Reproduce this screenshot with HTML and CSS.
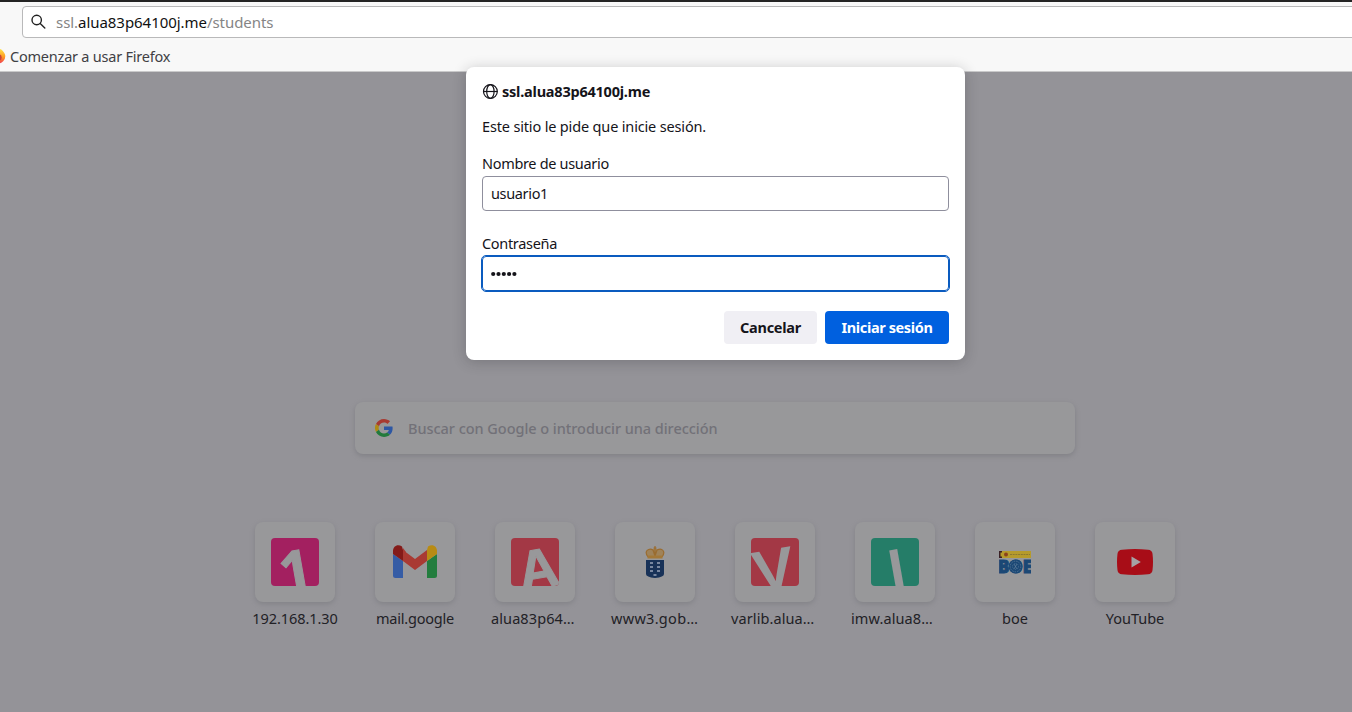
FILE: index.html
```
<!DOCTYPE html>
<html lang="es">
<head>
<meta charset="utf-8">
<title>Inicio de sesión</title>
<link rel="stylesheet" href="styles.css">
</head>
<body>
<header class="chrome">
  <div class="urlbar">
    <svg class="search-icon" width="16" height="16" viewBox="0 0 16 16" fill="none" stroke="#222" stroke-width="1.400" stroke-linecap="round"><circle cx="5.700" cy="6" r="4.700"/><path d="M9.200 9.500l4.600 4.600"/></svg>
    <span class="url">ssl.<span class="host">alua83p64100j.me</span>/students</span>
  </div>
  <div class="bookmarks">
    <svg class="fox" width="6" height="16" viewBox="10 0 6 16"><defs><linearGradient id="flame" x1="0" y1="0" x2="0" y2="1"><stop offset="0" stop-color="#ffe14a"/><stop offset=".55" stop-color="#ff9a1f"/><stop offset="1" stop-color="#f03a55"/></linearGradient></defs><path d="M8 3L10.500 1c2 1.500 4.800 4 4.800 7.200A7.300 7.300 0 0 1 8 15.500z" fill="url(#flame)"/><circle cx="8.500" cy="9.500" r="3.200" fill="#c8433c"/></svg>
    <span class="bookmark">Comenzar a usar Firefox</span>
  </div>
</header>
<main class="page">
  <div class="search">
    <svg width="18" height="18" viewBox="0 0 48 48"><path fill="#a73a31" d="M24 9.500c3.500 0 6.700 1.200 9.200 3.600l6.900-6.900C35.900 2.400 30.500 0 24 0 14.600 0 6.500 5.400 2.600 13.200l8 6.200C12.400 13.700 17.700 9.500 24 9.500z"/><path fill="#2d57a4" d="M47 24.500c0-1.600-.2-3.100-.4-4.500H24v9h12.900c-.6 3-2.300 5.500-4.800 7.200l7.700 6C44.400 38 47 31.800 47 24.500z"/><path fill="#b08a14" d="M10.500 28.600A14.500 14.500 0 0 1 10.500 19.400l-7.900-6.200a24 24 0 0 0 0 21.600z"/><path fill="#227a3b" d="M24 48c6.500 0 11.900-2.100 15.900-5.800l-7.800-6c-2.100 1.500-4.900 2.300-8.100 2.300-6.300 0-11.600-4.200-13.500-9.900l-7.900 6.200C6.500 42.600 14.600 48 24 48z"/></svg>
    <span class="placeholder">Buscar con Google o introducir una dirección</span>
  </div>
  <div class="sites">
    <div class="site"><div class="tile"><div class="letter pink"><span class="one">1</span></div></div><span class="name n1">192.168.1.30</span></div>
    <div class="site"><div class="tile"><svg width="44" height="34" viewBox="0 0 44 34"><path fill="#355ca5" d="M0 9l10 7v17H2.500Q0 33 0 30.500z"/><path fill="#237d3e" d="M44 9l-10 7v17h7.500Q44 33 44 30.500z"/><path fill="#a93a33" d="M10 5l12 9 12-9v11L22 25 10 16z"/><path fill="#841b19" d="M0 6C0 .7 5-1.500 9 1.500l1 3.500V16L0 9z"/><path fill="#b88b14" d="M44 6c0-5.300-5-7.500-9-4.500l-1 3.500V16l10-7z"/><path fill="#a93a33" d="M10 3l3 4V17l-3-1z"/></svg></div><span class="name n2">mail.google</span></div>
    <div class="site"><div class="tile"><div class="letter red"><span class="a">A</span></div></div><span class="name cut n3">alua83p64…</span></div>
    <div class="site"><div class="tile"><svg class="crest" width="20" height="32" viewBox="0 0 20 32"><path fill="#a37838" opacity=".65" d="M3 11L.8 6 4 3l4 .5L10 1l2 2.500L16 3l3.200 3L17 11z"/><g fill="none" stroke="#9a6c30" stroke-width="1.200"><path d="M3 11Q0 7 2 4.500 5 2 8 4L10 10 12 4Q16 2 18 4.500 20 7 17 11M10 0v10M8.500 2h3"/></g><path fill="#a37838" d="M2.500 9.500h15v3h-15z"/><path fill="#183258" d="M1 14h18v14q0 3-9 4-9-1-9-4z"/><path fill="#7887a0" d="M5 16h3v2H5zM12 16h3v2h-3zM5 20h3v2H5zM12 20h3v2h-3zM5 24h3v2H5zM12 24h3v2h-3zM8.500 28h3v2h-3z"/></svg></div><span class="name cut n4">www3.gob…</span></div>
    <div class="site"><div class="tile"><div class="letter red"><span class="v">V</span></div></div><span class="name cut n5">varlib.alua…</span></div>
    <div class="site"><div class="tile"><div class="letter green"><span class="i">I</span></div></div><span class="name cut n6">imw.alua8…</span></div>
    <div class="site"><div class="tile"><svg width="32" height="24" viewBox="0 0 32 24"><path fill="#b69b2c" d="M0 1h32v7H0z"/><path fill="#3a2025" d="M0 1h3v1.500H1.500v4H3V8H0z"/><circle cx="7" cy="4.500" r="2" fill="#8b421c"/><path d="M11 4.500h20" stroke="#8b7930" stroke-dasharray="2 .7"/><text class="boe" x="-1" y="22.500" textLength="34" lengthAdjust="spacingAndGlyphs">BOE</text><circle cx="16.500" cy="16.500" r="7" fill="#1b4875"/><g fill="none" stroke="#60809c" stroke-width=".7"><circle cx="16.500" cy="16.500" r="5.300" stroke-dasharray="1.500 1"/><circle cx="16.500" cy="16.500" r="3" stroke-dasharray="1 1"/><path d="M15 14l3 5m0-5l-3 5"/></g></svg></div><span class="name n7">boe</span></div>
    <div class="site"><div class="tile"><svg width="36" height="26" viewBox="0 0 36 26"><path fill="#a80d17" d="M5 .7Q18-.7 31 .7q4 .3 4.500 4 1 8.300 0 16.600-.5 3.700-4.500 4Q18 26.700 5 25.300 1 25 .5 21.300-.5 13 .5 4.700 1 1 5 .7z"/><path fill="#a5a2a4" d="M14.500 7.500l9.300 5.500-9.300 5.500z"/></svg></div><span class="name n8">YouTube</span></div>
  </div>
</main>
<section class="dialog">
  <div class="title"><svg width="16" height="16" viewBox="0 0 16 16" fill="none" stroke="#15141a" stroke-width="1.200"><circle cx="8.400" cy="8.500" r="6.900"/><ellipse cx="8.400" cy="8.500" rx="3.700" ry="6.900"/><path d="M1.500 8.500h14"/></svg><span class="site-host">ssl.alua83p64100j.me</span></div>
  <p class="message"><span class="msg-text">Este sitio le pide que inicie sesión.</span></p>
  <div class="label"><span class="user-label">Nombre de usuario</span></div>
  <div class="field"><span class="user-value">usuario1</span></div>
  <div class="label second"><span class="pass-label">Contraseña</span></div>
  <div class="field focused"><svg width="28" height="6" viewBox="0 0 28 6" fill="#15141a"><circle cx="2.200" cy="3" r="2.100"/><circle cx="7.500" cy="3" r="2.100"/><circle cx="12.800" cy="3" r="2.100"/><circle cx="18.100" cy="3" r="2.100"/><circle cx="23.400" cy="3" r="2.100"/></svg></div>
  <div class="actions"><div class="button cancel"><span class="cancel-text">Cancelar</span></div><div class="button primary"><span class="login-text">Iniciar sesión</span></div></div>
</section>
</body>
</html>
```
FILE: styles.css
```
* { box-sizing: border-box; }
body { margin: 0; height: 712px; overflow: hidden; position: relative; display: flex; flex-direction: column; font: 14.5px/20px "Noto Sans", sans-serif; color: #15141a; background: #949398; }
span { white-space: nowrap; }
.chrome { height: 72px; flex: none; border-top: 2px solid #242424; border-bottom: 1px solid #c9c9ca; background: #f8f8f8; padding-top: 4px; overflow: hidden; }
.urlbar { height: 32px; width: 1340px; margin-left: 22px; border: 1px solid #b9b9ba; border-radius: 4px; background: #fff; display: flex; align-items: center; padding-left: 8px; gap: 9px; }
.url { color: #858585; font-size: 15px; letter-spacing: -.05px; }
.host { color: #111; }
.bookmarks { height: 36px; display: flex; align-items: center; gap: 4px; color: #404044; letter-spacing: -.22px; }
.page { flex: 1; display: flex; flex-direction: column; align-items: center; padding: 330px 0 0 78px; }
.search { width: 720px; height: 52px; border-radius: 8px; background: #98989a; box-shadow: 0 2px 5px #818186; display: flex; align-items: center; padding-left: 20px; gap: 15px; color: #727178; font-weight: 500; letter-spacing: -.04px; }
.sites { display: flex; margin-top: 68px; }
.site { width: 120px; display: flex; flex-direction: column; align-items: center; gap: 6px; color: #222126; }
.tile { width: 80px; height: 80px; border-radius: 8px; background: #98989a; box-shadow: 0 2px 5px #838388; display: flex; align-items: center; justify-content: center; }
.cut { align-self: flex-start; margin-left: 16px; letter-spacing: .1px; }
.n1 { letter-spacing: -.08px; }
.n2 { letter-spacing: -.2px; }
.n4 { letter-spacing: .3px; }
.letter { width: 48px; height: 48px; border-radius: 4px; overflow: hidden; display: flex; justify-content: center; color: #98989a; font: 700 56px/56px "Liberation Sans", sans-serif; padding-top: 3px; }
.letter span { transform: rotate(-10deg); }
.letter .one { font-family: "Noto Sans", sans-serif; margin-right: 1px; -webkit-text-stroke: 1px #98989a; }
.letter .a { margin-left: 4px; -webkit-text-stroke: 1px #98989a; }
.letter .v { margin-right: 4px; transform: rotate(-10deg) scaleX(1.12); }
.letter .i { margin-left: 1px; }
.pink { background: #a32060; }
.red { background: #a33845; }
.green { background: #257d68; }
.boe { font: 900 18px "Noto Sans", sans-serif; fill: #1b4875; stroke: #1b4875; stroke-width: 1px; }
.dialog { position: absolute; left: 466px; top: 67px; width: 499px; height: 293px; border-radius: 8px; background: #fff; box-shadow: 0 2px 14px rgba(30,30,35,.24); padding: 14px 16px 16px; display: flex; flex-direction: column; }
.title { height: 20px; display: flex; align-items: center; gap: 4px; font-weight: 700; letter-spacing: -.22px; }
.message { margin: 15px 0 17px; height: 20px; letter-spacing: -.16px; }
.label { height: 20px; letter-spacing: -.32px; }
.second { margin-top: 22px; }
.field { height: 35px; margin-top: 3px; border: 1px solid #8f8f9d; border-radius: 4px; display: flex; align-items: center; padding-left: 8px; letter-spacing: -.35px; }
.user-value { margin-bottom: 2px; }
.focused { outline: 1px solid #0a5bbf; border-color: #0a5bbf; }
.actions { display: flex; justify-content: flex-end; gap: 8px; margin-top: auto; }
.button { height: 33px; border-radius: 4px; display: flex; align-items: center; justify-content: center; font-weight: 700; padding-bottom: 2px; }
.cancel { width: 93px; background: #f0eff4; letter-spacing: -.25px; }
.primary { width: 124px; background: #0060df; color: #fff; letter-spacing: -.38px; }
```
